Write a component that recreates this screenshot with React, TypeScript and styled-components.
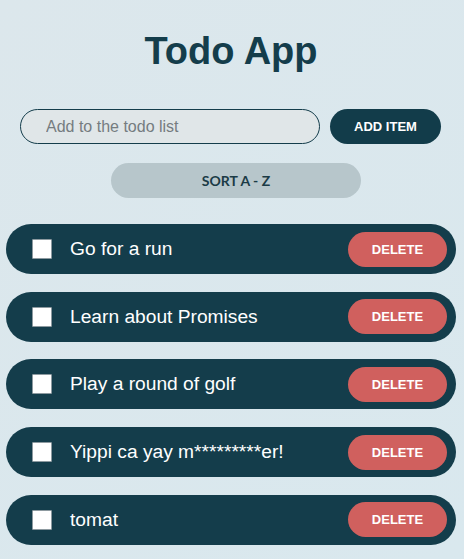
import React, { useState } from 'react';
import styled, { createGlobalStyle } from 'styled-components';

const GlobalStyle = createGlobalStyle`
  html, body {
    margin: 0;
    padding: 0;
  }
  body {
    min-height: 100vh;
    background: linear-gradient(135deg, #dce7ec 0%, #d9e8ee 100%);
    font-family: 'Liberation Sans', Arial, sans-serif;
  }
`;

const Page = styled.div`
  width: 450px;
  margin-left: 6px;
  padding-top: 28px;
  display: flex;
  flex-direction: column;
  align-items: stretch;
`;

const Title = styled.h1`
  margin: 0;
  text-align: center;
  font-family: 'Liberation Sans', Arial, sans-serif;
  font-weight: 700;
  font-size: 38px;
  line-height: 46px;
  color: #143d4b;
`;

const Form = styled.form`
  display: flex;
  align-items: center;
  gap: 10px;
  margin: 35px 0 0 14px;
`;

const Input = styled.input`
  box-sizing: border-box;
  width: 300px;
  height: 35px;
  padding: 0 0 0 25px;
  border: 1px solid #143d4b;
  border-radius: 18px;
  background: #e0e6e8;
  font-family: 'Liberation Sans', Arial, sans-serif;
  font-size: 16px;
  color: #143d4b;
  outline: none;

  &::placeholder {
    color: #757c80;
  }
`;

const PillButton = styled.button<{ $bg: string; $fg: string; $w: number; $lato?: boolean }>`
  box-sizing: border-box;
  width: ${p => p.$w}px;
  height: 35px;
  border: none;
  border-radius: 18px;
  background: ${p => p.$bg};
  color: ${p => p.$fg};
  font-family: ${p => (p.$lato ? 'Lato, sans-serif' : "'Liberation Sans', Arial, sans-serif")};
  font-weight: 700;
  font-size: ${p => (p.$lato ? 14 : 13)}px;
  cursor: pointer;
  padding: 0;
`;

const SortRow = styled.div`
  display: flex;
  justify-content: center;
  margin: 19px 0 0 10px;
`;

const List = styled.ul`
  list-style: none;
  margin: 26px 0 0;
  padding: 0;
  display: flex;
  flex-direction: column;
  gap: 17.7px;
`;

const Item = styled.li`
  height: 50px;
  border-radius: 25px;
  background: #143d4b;
  display: flex;
  align-items: center;
  padding: 0 9px 0 26px;
`;

const Check = styled.input`
  appearance: none;
  box-sizing: border-box;
  width: 20px;
  height: 20px;
  margin: 0;
  background: #ffffff;
  border: 1px solid #8d9aa0;
  border-radius: 1px;
  flex-shrink: 0;
`;

const Label = styled.span`
  flex: 1;
  margin-left: 18px;
  color: #ffffff;
  font-size: 19.2px;
`;

const DeleteButton = styled.button`
  width: 99px;
  height: 35px;
  border: none;
  border-radius: 18px;
  background: #d0605e;
  color: #ffffff;
  font-family: 'Liberation Sans', Arial, sans-serif;
  font-weight: 700;
  font-size: 13px;
  padding: 0;
  cursor: pointer;
`;

const initial = [
  'Go for a run',
  'Learn about Promises',
  'Play a round of golf',
  'Yippi ca yay m*********er!',
  'tomat',
];

export default function App() {
  const [todos, setTodos] = useState<string[]>(initial);
  const [text, setText] = useState('');

  const add = (e: React.FormEvent) => {
    e.preventDefault();
    if (text.trim()) setTodos(prev => [...prev, text.trim()]);
    setText('');
  };

  return (
    <>
      <GlobalStyle />
      <Page>
        <Title>Todo App</Title>
        <Form onSubmit={add}>
          <Input
            placeholder="Add to the todo list"
            value={text}
            onChange={e => setText(e.target.value)}
          />
          <PillButton type="submit" $bg="#123c4a" $fg="#ffffff" $w={111}>
            ADD ITEM
          </PillButton>
        </Form>
        <SortRow>
          <PillButton
            type="button"
            $bg="#b7c6cb"
            $fg="#1b3b46"
            $w={250}
            $lato
            onClick={() => setTodos(prev => [...prev].sort((a, b) => a.localeCompare(b)))}
          >
            SORT A - Z
          </PillButton>
        </SortRow>
        <List>
          {todos.map((t, i) => (
            <Item key={i}>
              <Check type="checkbox" />
              <Label>{t}</Label>
              <DeleteButton onClick={() => setTodos(prev => prev.filter((_, j) => j !== i))}>
                DELETE
              </DeleteButton>
            </Item>
          ))}
        </List>
      </Page>
    </>
  );
}
